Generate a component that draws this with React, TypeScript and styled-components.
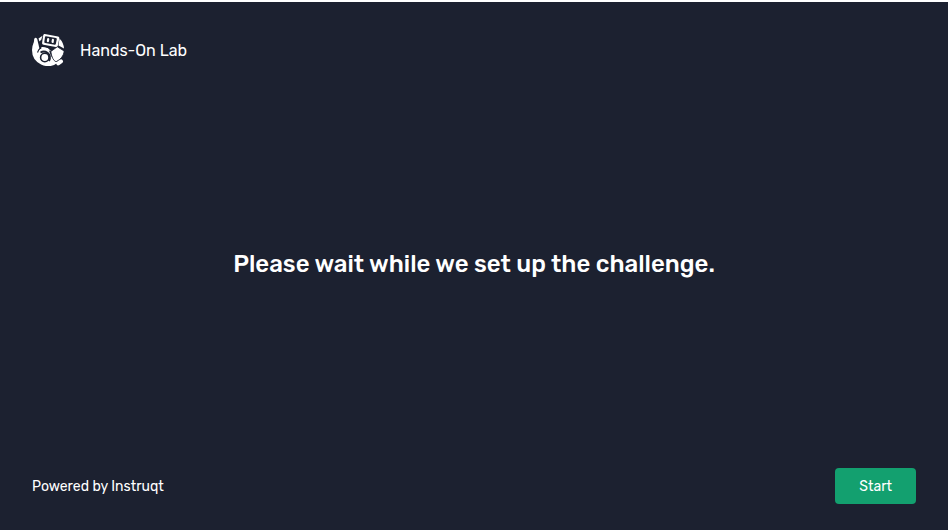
import React from "react";
import styled, { createGlobalStyle } from "styled-components";

const GlobalStyle = createGlobalStyle`
  *, *::before, *::after { box-sizing: border-box; }
  body {
    margin: 0;
    background: #1c2130;
    color: #fff;
    font-family: Rubik, Roboto, "Liberation Sans", sans-serif;
  }
`;

const Page = styled.div`
  min-height: 100vh;
  display: flex;
  flex-direction: column;
  border-top: 2px solid #fff;
  background: #1c2130;
`;

const Header = styled.header`
  display: flex;
  align-items: center;
  gap: 16px;
  padding: 32px;
`;

const Logo = styled.svg`
  width: 32px;
  height: 32px;
  flex: none;
`;

const Brand = styled.span`
  font-size: 16px;
  line-height: 25px;
`;

const Main = styled.main`
  flex: 1;
  display: flex;
  align-items: center;
  justify-content: center;
  padding: 0 32px 12px;
`;

const Message = styled.h1`
  margin: 0;
  font-size: 24px;
  font-weight: 500;
  line-height: 32px;
  text-align: center;
`;

const Footer = styled.footer`
  display: flex;
  align-items: center;
  justify-content: space-between;
  padding: 26px 32px;
`;

const Powered = styled.p`
  margin: 0;
  font-size: 14px;
  line-height: 21px;
`;

const StartButton = styled.button`
  height: 36px;
  padding: 0 24px;
  border: 0;
  border-radius: 4px;
  background: #13a06f;
  color: #fff;
  font: inherit;
  font-size: 14px;
  line-height: 21px;
  cursor: pointer;
`;

const RobotLogo = () => (
  <Logo viewBox="0 0 32 32" aria-hidden="true">
    <path d="M2 8Q0 12 0 16A16 16 0 0 0 26 28.5L19 22L16 14L8 15L6 19L3 14Z" fill="#fff" />
    <path d="M2.2 5Q3.5 2.5 5.2 5L8 17L5 21L1.5 12Z" fill="#fff" />
    <path d="M6.5 4.5L10.5 1.8L9.3 5.5L7.5 7.5Z" fill="#fff" />
    <path d="M27.5 4.5Q31.5 8.5 32 14.5L26.5 11.5Z" fill="#fff" />
    <path d="M9.5 13Q15 12.5 19 17L14 16L9 15.5Z" fill="#fff" />
    <path d="M12.8 0L26 2.4Q27.6 2.7 27.3 4.4L25.8 11.7Q25.4 13.2 23.8 12.9L11.5 10.8Q9.8 10.4 10.1 8.8L11.2 1.3Q11.5 -.2 12.8 0Z" fill="#fff" />
    <path d="M14 2.2L24 4.1Q25 4.3 24.8 5.3L23.8 10Q23.6 11 22.6 10.8L13.2 9.1Q12.2 8.9 12.3 8L13 3Q13.1 2 14 2.2Z" fill="#1c2130" />
    <path d="M16.2 5L15.9 7.1M20.9 5.9L20.6 8" stroke="#fff" strokeWidth="2.2" strokeLinecap="round" />
    <path d="M8.5 18.5Q12 16.5 15.5 18.8Q19.5 22 17 27" fill="none" stroke="#1c2130" strokeWidth="1.9" />
    <path d="M5.5 18.5Q6.5 15 9 13.8" fill="none" stroke="#1c2130" strokeWidth="1.1" />
    <circle cx="12.8" cy="23.5" r="4.2" fill="#fff" stroke="#1c2130" strokeWidth="1.6" />
    <path d="M18.8 17.5L25.3 12.8L32.2 17Q31.5 24 24 27.8Q20 26 18.8 17.5Z" fill="#fff" stroke="#1c2130" strokeWidth=".8" />
    <path d="M26.2 29.3L29 27.3" stroke="#fff" strokeWidth="4" strokeLinecap="round" />
  </Logo>
);

export default function App() {
  return (
    <>
      <GlobalStyle />
      <Page>
        <Header>
          <RobotLogo />
          <Brand>Hands-On Lab</Brand>
        </Header>
        <Main>
          <Message>Please wait while we set up the challenge.</Message>
        </Main>
        <Footer>
          <Powered>Powered by Instruqt</Powered>
          <StartButton type="button">Start</StartButton>
        </Footer>
      </Page>
    </>
  );
}
